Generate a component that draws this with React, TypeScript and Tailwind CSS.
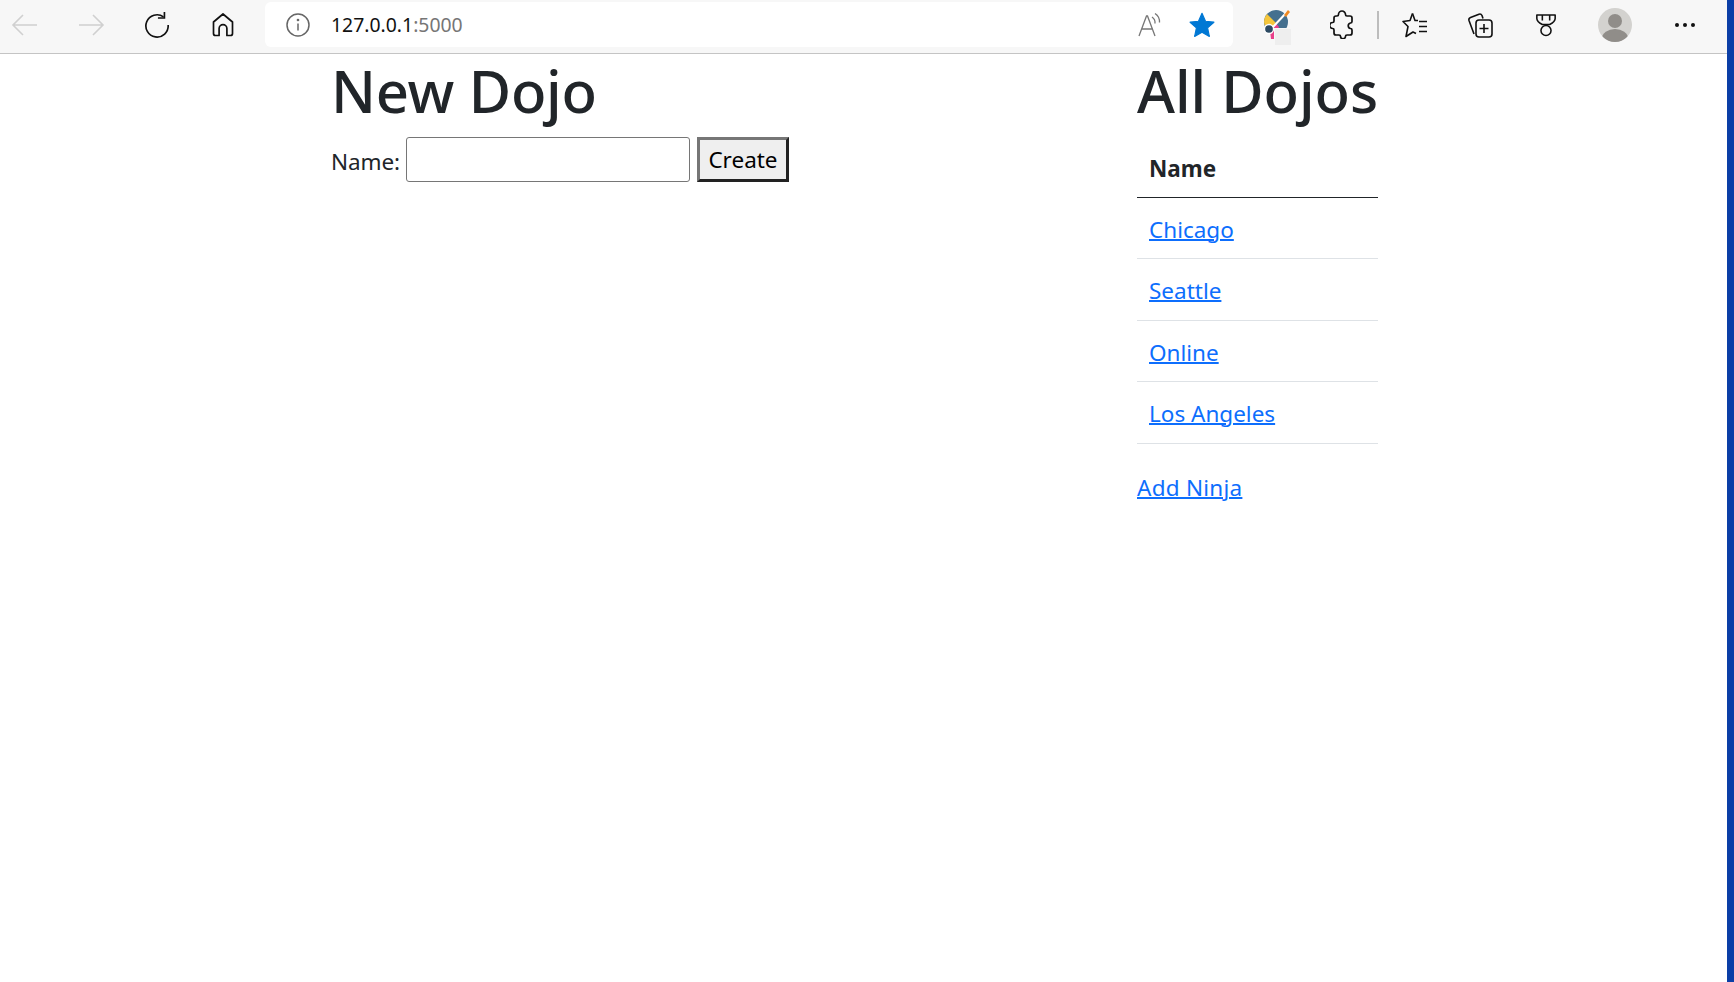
import React from 'react';

const dojos = ['Chicago', 'Seattle', 'Online', 'Los Angeles'];

const IconBtn = ({ className = '', children }: { className?: string; children: React.ReactNode }) => (
    <div className={`w-[40px] h-[40px] flex items-center justify-center shrink-0 ${className}`}>{children}</div>
);

const Toolbar = () => (
    <div className="h-[54px] bg-[#f7f7f7] border-b border-[#c4c4c4] flex items-start pt-[2px] shrink-0">
        <div className="flex items-center h-[45px] pl-[5px] gap-[26px]">
            <IconBtn>
                <svg width="28" height="24" viewBox="0 0 28 24" fill="none" stroke="#d0d0d0" strokeWidth="1.6">
                    <path d="M26 12H2M12 2 2 12l10 10" />
                </svg>
            </IconBtn>
            <IconBtn>
                <svg width="28" height="24" viewBox="0 0 28 24" fill="none" stroke="#d0d0d0" strokeWidth="1.6">
                    <path d="M2 12h24M16 2l10 10-10 10" />
                </svg>
            </IconBtn>
            <IconBtn>
                <svg width="26" height="26" viewBox="0 0 28 28" fill="none" stroke="#111" strokeWidth="1.8">
                    <path d="M21 5.200A12 12 0 1 0 26 14" />
                    <path d="M22 0v6.500h-7" />
                </svg>
            </IconBtn>
            <IconBtn>
                <svg width="24" height="25" viewBox="0 0 24 25" fill="none" stroke="#111" strokeWidth="1.7" strokeLinejoin="round">
                    <path d="M12 2 2.500 10v11.500a2 2 0 0 0 2 2h3.600v-7a3.900 3.900 0 0 1 7.800 0v7h3.600a2 2 0 0 0 2-2V10z" />
                </svg>
            </IconBtn>
        </div>
        <div className="ml-[22px] w-[968px] h-[45px] bg-white rounded-[6px] flex items-center pl-[20px] shrink-0">
            <svg width="26" height="26" viewBox="0 0 26 26" fill="none" stroke="#666" strokeWidth="1.5" className="shrink-0">
                <circle cx="13" cy="13" r="11" />
                <path d="M13 11.500v7" />
                <circle cx="13" cy="8" r="0.6" fill="#666" />
            </svg>
            <span className="ml-[20px] text-[19.4px] text-[#111]">
                127.0.0.1<span className="text-[#767676]">:5000</span>
            </span>
            <div className="ml-auto flex items-center">
                <svg width="26" height="26" viewBox="0 0 26 26" fill="none" stroke="#777" strokeWidth="1.3">
                    <path d="M2 24 9.500 4h1L18 24M5 17h11" />
                    <path d="M15 5a7 7 0 0 1 3 6.500M18 1.500a10 10 0 0 1 4.500 9" />
                </svg>
                <svg width="28" height="28" viewBox="0 0 24 24" fill="#0078d4" stroke="#0078d4" strokeWidth="1" strokeLinejoin="round" className="ml-[25px] mr-[17px]">
                    <path d="M12 2l3 6.800 7.200.8-5.400 4.900 1.500 7.300L12 18.200 5.700 21.800l1.500-7.300L1.800 9.600 9 8.800z" />
                </svg>
            </div>
        </div>
        <div className="flex items-center h-[45px]">
            <IconBtn className="ml-[24px] relative">
                <svg width="30" height="32" viewBox="0 0 30 32">
                    <circle cx="14" cy="13" r="12" fill="#45708f" />
                    <path d="M2 13a12 12 0 0 1 3-8l9 9-6 8a12 12 0 0 1-6-9z" fill="#f5c63c" />
                    <path d="M8 22l6-8 3 4-3 12H9z" fill="#e8408a" />
                    <circle cx="7" cy="20" r="4.500" fill="#2d4a63" stroke="#fff" strokeWidth="1.3" />
                    <path d="M11 18 24 4" stroke="#fff" strokeWidth="2" />
                    <path d="M22 6l4-5 2 2-4 5z" fill="#f08a24" />
                </svg>
                <div className="absolute left-[17px] top-[23px] w-[18px] h-[18px] bg-[#eeeeee] border border-[#f7f7f7]" />
            </IconBtn>
            <IconBtn className="ml-[25px]">
                <svg width="24" height="29" viewBox="0 0 24 29" fill="none" stroke="#111" strokeWidth="1.7" strokeLinejoin="round">
                    <path d="M8.500 4.500a3.500 3.500 0 0 1 7 0c0 .8.4 1.500 1.500 1.500h3a2 2 0 0 1 2 2v3.500c0 1-.7 1.500-1.500 1.500a2.800 2.800 0 0 0 0 5.500c.8 0 1.500.5 1.500 1.500V23a2 2 0 0 1-2 2h-3c-1 0-1.500.6-1.500 1.300a2.500 2.500 0 0 1-5 0C10.500 25.600 10 25 9 25H6a2 2 0 0 1-2-2v-3c0-1-.6-1.500-1.300-1.500a3 3 0 0 1 0-6C3.400 12.500 4 12 4 11V8a2 2 0 0 1 2-2h1c1 0 1.500-.7 1.500-1.500z" />
                </svg>
            </IconBtn>
            <div className="ml-[15px] w-[2px] h-[28px] bg-[#bdbdbd] shrink-0" />
            <IconBtn className="ml-[16px]">
                <svg width="26" height="26" viewBox="0 0 26 26" fill="none" stroke="#111" strokeWidth="1.6" strokeLinejoin="round">
                    <path d="M10.500 1.500 8 8.500 1 9.500l5 5-2 10 7-4.500 3 1.500" />
                    <path d="M10.500 1.500 13 8.500h3M17 9.500h8M17 14.500h8M17 19.500h8" />
                </svg>
            </IconBtn>
            <IconBtn className="ml-[25px]">
                <svg width="28" height="28" viewBox="0 0 28 28" fill="none" stroke="#111" strokeWidth="1.6" strokeLinejoin="round">
                    <path d="M8 23 3 9.500a2.500 2.500 0 0 1 1.500-3L13 3.200a2.500 2.500 0 0 1 3 1.300l1 3" />
                    <rect x="10" y="9" width="16" height="17" rx="3" />
                    <path d="M18 13v9M13.500 17.500h9" />
                </svg>
            </IconBtn>
            <IconBtn className="ml-[26px]">
                <svg width="22" height="28" viewBox="0 0 24 28" fill="none" stroke="#111" strokeWidth="1.7" strokeLinejoin="round">
                    <path d="M2 3h20v4c0 3-3 5-6 6.500H8C5 12 2 10 2 7zM8 3v6M16 3v6" />
                    <circle cx="12" cy="20" r="5.500" />
                </svg>
            </IconBtn>
            <IconBtn className="ml-[29px]">
                <svg width="34" height="34" viewBox="0 0 34 34" className="rounded-full bg-[#d3d2cf]">
                    <circle cx="17" cy="13" r="7" fill="#908d89" />
                    <ellipse cx="17" cy="30" rx="13" ry="9" fill="#908d89" />
                </svg>
            </IconBtn>
            <IconBtn className="ml-[30px]">
                <svg width="22" height="6" viewBox="0 0 22 6" fill="#111">
                    <circle cx="3" cy="3" r="2" />
                    <circle cx="11" cy="3" r="2" />
                    <circle cx="19" cy="3" r="2" />
                </svg>
            </IconBtn>
        </div>
    </div>
);

export default function App() {
    return (
        <div className="h-[982px] flex bg-white overflow-hidden font-['Noto_Sans',sans-serif] text-[#212529] text-[22.5px] leading-[34px]">
            <div className="w-[1727px] flex flex-col shrink-0">
                <Toolbar />
                <div className="flex pl-[332px]">
                    <div className="w-[805px] shrink-0">
                        <h1 className="text-[58px] leading-[73px] font-medium tracking-[-0.3px] -ml-[1px] mb-[10px]">New Dojo</h1>
                        <form className="flex items-center">
                            <label className="-ml-[1px] pt-[4px] tracking-[-0.1px]">Name:</label>
                            <input className="ml-[6px] w-[284px] h-[45px] bg-white border border-[#767676] rounded-[3px]" />
                            <button type="button" className="ml-[7px] w-[92px] h-[45px] bg-[#efefef] border-[3px] border-t-[#767676] border-l-[#767676] border-r-[#222] border-b-[#222] text-black pt-[1px]">
                                Create
                            </button>
                        </form>
                    </div>
                    <div className="w-[241px] shrink-0">
                        <h1 className="text-[58px] leading-[73px] font-medium whitespace-nowrap tracking-[-0.05px]">All Dojos</h1>
                        <table className="w-full mt-[9px] border-collapse">
                            <thead>
                                <tr className="border-b border-[#212529]">
                                    <th className="h-[61px] px-[12px] pt-[6px] text-left font-bold">Name</th>
                                </tr>
                            </thead>
                            <tbody>
                                {dojos.map((name) => (
                                    <tr key={name} className="border-b border-[#dee2e6]">
                                        <td className="h-[61.5px] px-[12px] pt-[4px]">
                                            <a href="#" className="text-[#0d6efd] underline decoration-2">{name}</a>
                                        </td>
                                    </tr>
                                ))}
                            </tbody>
                        </table>
                        <a href="#" className="block w-fit mt-[27px] text-[#0d6efd] underline decoration-2 tracking-[0.25px]">Add Ninja</a>
                    </div>
                </div>
            </div>
            <div className="flex-1 bg-[#0b3ea6]" />
        </div>
    );
}
